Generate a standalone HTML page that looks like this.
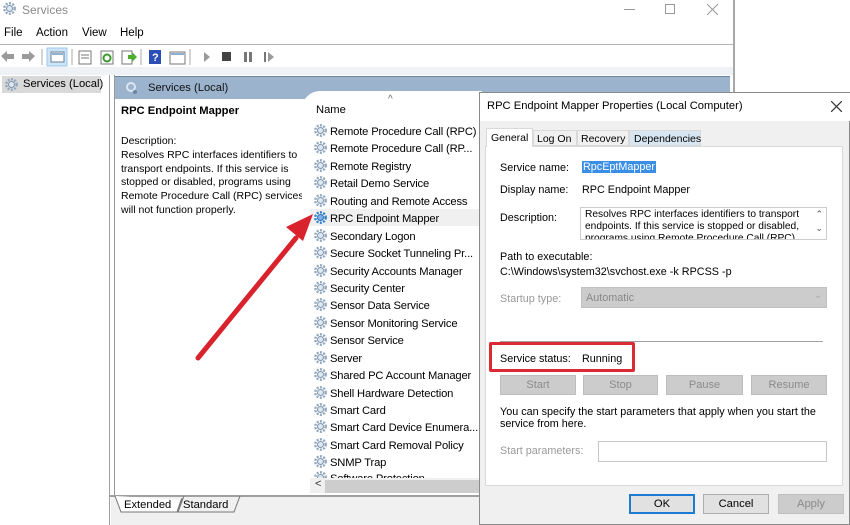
<!DOCTYPE html>
<html><head><meta charset="utf-8"><style>
*{margin:0;padding:0;box-sizing:border-box}
body{width:850px;height:525px;overflow:hidden;background:#fff;font-family:"Liberation Sans",sans-serif;font-size:11px;color:#000;position:relative}
.a{position:absolute;white-space:nowrap}
.g{display:inline-block;width:13px;height:13px;vertical-align:-2px}
.row{position:absolute;left:314px;font-size:11.2px;letter-spacing:-0.15px}
.btn{position:absolute;height:20px;background:#cccccc;border:1px solid #bdbdbd;color:#8a8a8a;text-align:center;line-height:18px;font-size:11px}
.lbl{position:absolute;left:500px;font-size:10.8px}
</style></head><body>
<svg width="0" height="0" style="position:absolute"><defs>
<g id="gear"><circle cx="6.5" cy="6.5" r="5.2" fill="none" stroke="#8fa6bf" stroke-width="2.4" stroke-dasharray="2 1.4"/><circle cx="6.5" cy="6.5" r="3" fill="#dfe8f1" stroke="#7e93ab" stroke-width="1"/></g>
<g id="gearb"><circle cx="6.5" cy="6.5" r="5.2" fill="none" stroke="#2f7fd0" stroke-width="2.4" stroke-dasharray="2 1.4"/><circle cx="6.5" cy="6.5" r="3" fill="#7fb3e8" stroke="#2a6fb8" stroke-width="1"/></g>
</defs></svg>

<!-- main window -->
<div class="a" style="left:733px;top:0;width:2px;height:93px;background:#a8a8a8"></div>
<svg class="a" style="left:3px;top:2px" width="16" height="16"><use href="#gear"/></svg>
<div class="a" style="left:22px;top:3px;font-size:12px;color:#8a8a8a">Services</div>
<div class="a" style="left:624px;top:9px;width:11px;height:1px;background:#999"></div>
<div class="a" style="left:665px;top:4px;width:10px;height:10px;border:1px solid #999"></div>
<svg class="a" style="left:707px;top:4px" width="11" height="11"><path d="M0 0L11 11M11 0L0 11" stroke="#999" stroke-width="1"/></svg>
<div class="a" style="left:4px;top:27px;font-size:11.5px">File</div>
<div class="a" style="left:36px;top:27px;font-size:11.5px">Action</div>
<div class="a" style="left:82px;top:27px;font-size:11.5px">View</div>
<div class="a" style="left:120px;top:27px;font-size:11.5px">Help</div>
<div class="a" style="left:0;top:44px;width:733px;height:1px;background:#b5b5b5"></div>
<!-- toolbar -->
<div class="a" style="left:0;top:45px;width:733px;height:22px;background:#fff"></div>
<svg class="a" style="left:0;top:47px" width="290" height="20">
<path d="M1 9l6-5v3h7v5H7v3z" fill="#9a9a9a"/><path d="M35 9l-6-5v3h-7v5h7v3z" fill="#9a9a9a"/>
<line x1="42" y1="2" x2="42" y2="18" stroke="#aaa"/>
<rect x="47" y="1" width="20" height="18" fill="#cde4f7" stroke="#99c9ef"/><rect x="51" y="5" width="13" height="10" fill="#fff" stroke="#6b7f95"/><rect x="52" y="6" width="11" height="2" fill="#8fb0d0"/>
<line x1="72" y1="2" x2="72" y2="18" stroke="#aaa"/>
<rect x="79" y="4" width="12" height="13" fill="#fff" stroke="#777"/><line x1="81" y1="8" x2="89" y2="8" stroke="#777"/><line x1="81" y1="11" x2="89" y2="11" stroke="#777"/>
<rect x="101" y="4" width="12" height="13" fill="#fff" stroke="#777"/><circle cx="107" cy="11" r="3.5" fill="none" stroke="#3a9a2a" stroke-width="2"/>
<rect x="122" y="4" width="10" height="13" fill="#fff" stroke="#777"/><path d="M128 8h4v-3l5 5-5 5v-3h-4z" fill="#4cae2f"/>
<line x1="141" y1="2" x2="141" y2="18" stroke="#aaa"/>
<rect x="149" y="3" width="12" height="14" fill="#2b4fb6"/><text x="152" y="14" fill="#fff" font-size="11" font-family="Liberation Sans" font-weight="bold">?</text>
<rect x="170" y="5" width="15" height="12" fill="#fff" stroke="#777"/><rect x="171" y="6" width="13" height="2" fill="#8fb0d0"/>
<line x1="190" y1="2" x2="190" y2="18" stroke="#aaa"/>
<path d="M204 5v10l6-5z" fill="#9a9a9a"/><rect x="222" y="5" width="9" height="9" fill="#444"/>
<rect x="244" y="5" width="3" height="10" fill="#777"/><rect x="249" y="5" width="3" height="10" fill="#777"/>
<rect x="264" y="5" width="2" height="10" fill="#777"/><path d="M268 5v10l6-5z" fill="#9a9a9a"/>
</svg>
<div class="a" style="left:0;top:67px;width:733px;height:8px;background:#eef2f7"></div>
<!-- left pane -->
<div class="a" style="left:0;top:75px;width:110px;height:450px;background:#fff;border-right:1px solid #a0a0a0"></div>
<div class="a" style="left:2px;top:76px;width:99px;height:17px;background:#d9d9d9"></div>
<svg class="a" style="left:5px;top:78px" width="14" height="14"><use href="#gear"/></svg>
<div class="a" style="left:23px;top:78px;font-size:11.2px">Services (Local)</div>
<!-- right pane -->
<div class="a" style="left:114px;top:75px;width:619px;height:425px;background:#fff;border-left:1px solid #999"></div>
<div class="a" style="left:115px;top:76px;width:615px;height:23px;background:#9bb3cd;border-top:1px solid #6d86a2"></div>
<svg class="a" style="left:125px;top:81px" width="14" height="14"><circle cx="6" cy="6" r="4" fill="none" stroke="#dbe6f2" stroke-width="2"/><circle cx="10" cy="11" r="2" fill="#6d86a2"/></svg>
<div class="a" style="left:148px;top:82px;font-size:11.2px;color:#111">Services (Local)</div>
<div class="a" style="left:121px;top:105px;font-size:11.2px;font-weight:bold">RPC Endpoint Mapper</div>
<div class="a" style="left:121px;top:135px;font-size:10.5px;line-height:13.8px;white-space:normal;width:185px">Description:<br>Resolves RPC interfaces identifiers to transport endpoints. If this service is stopped or disabled, programs using Remote Procedure Call (RPC) services will not function properly.</div>
<!-- list overlay -->
<div class="a" style="left:302px;top:91px;width:180px;height:405px;background:#fff;border-top-left-radius:18px"></div>
<div class="a" style="left:316px;top:104px;font-size:11.2px">Name</div>
<div class="a" style="left:388px;top:94px;font-size:10px;color:#666">^</div>
<div class="a" style="left:310px;top:209px;width:170px;height:17px;background:#f0f0f0"></div>
<div class="row" style="top:124px"><svg class="g"><use href="#gear"/></svg> Remote Procedure Call (RPC)</div>
<div class="row" style="top:141px"><svg class="g"><use href="#gear"/></svg> Remote Procedure Call (RP...</div>
<div class="row" style="top:159px"><svg class="g"><use href="#gear"/></svg> Remote Registry</div>
<div class="row" style="top:176px"><svg class="g"><use href="#gear"/></svg> Retail Demo Service</div>
<div class="row" style="top:194px"><svg class="g"><use href="#gear"/></svg> Routing and Remote Access</div>
<div class="row" style="top:211px"><svg class="g"><use href="#gearb"/></svg> RPC Endpoint Mapper</div>
<div class="row" style="top:229px"><svg class="g"><use href="#gear"/></svg> Secondary Logon</div>
<div class="row" style="top:246px"><svg class="g"><use href="#gear"/></svg> Secure Socket Tunneling Pr...</div>
<div class="row" style="top:264px"><svg class="g"><use href="#gear"/></svg> Security Accounts Manager</div>
<div class="row" style="top:281px"><svg class="g"><use href="#gear"/></svg> Security Center</div>
<div class="row" style="top:298px"><svg class="g"><use href="#gear"/></svg> Sensor Data Service</div>
<div class="row" style="top:316px"><svg class="g"><use href="#gear"/></svg> Sensor Monitoring Service</div>
<div class="row" style="top:333px"><svg class="g"><use href="#gear"/></svg> Sensor Service</div>
<div class="row" style="top:351px"><svg class="g"><use href="#gear"/></svg> Server</div>
<div class="row" style="top:368px"><svg class="g"><use href="#gear"/></svg> Shared PC Account Manager</div>
<div class="row" style="top:386px"><svg class="g"><use href="#gear"/></svg> Shell Hardware Detection</div>
<div class="row" style="top:403px"><svg class="g"><use href="#gear"/></svg> Smart Card</div>
<div class="row" style="top:420px"><svg class="g"><use href="#gear"/></svg> Smart Card Device Enumera...</div>
<div class="row" style="top:438px"><svg class="g"><use href="#gear"/></svg> Smart Card Removal Policy</div>
<div class="row" style="top:455px"><svg class="g"><use href="#gear"/></svg> SNMP Trap</div>
<div class="a" style="left:310px;top:468px;width:170px;height:10px;overflow:hidden"><div class="row" style="left:4px;top:3px"><svg class="g"><use href="#gear"/></svg> Software Protection</div></div>
<div class="a" style="left:310px;top:478px;width:170px;height:15px;background:#f0f0f0"></div>
<div class="a" style="left:325px;top:480px;width:155px;height:13px;background:#cdcdcd"></div>
<div class="a" style="left:315px;top:478px;font-size:11px;color:#333">&lt;</div>
<!-- bottom tabs -->
<div class="a" style="left:110px;top:495px;width:623px;height:2px;background:#a0a0a0"></div>
<div class="a" style="left:111px;top:497px;width:622px;height:28px;background:#f0f0f0"></div>
<svg class="a" style="left:112px;top:496px" width="130" height="20"><path d="M3 0l6 16h56l4-12" fill="#fff" stroke="#777"/><path d="M66 16l4-14M72 0l-6 16h56l6-16" fill="none" stroke="#777"/></svg>
<div class="a" style="left:124px;top:499px;font-size:11.2px">Extended</div>
<div class="a" style="left:183px;top:499px;font-size:11.2px">Standard</div>

<!-- arrow -->
<svg class="a" style="left:0;top:0" width="480" height="525">
<line x1="198" y1="358" x2="296" y2="238" stroke="#d8232d" stroke-width="5" stroke-linecap="round"/>
<path d="M313 214l-27 13 17 14z" fill="#d8232d"/>
</svg>

<!-- dialog -->
<div class="a" style="left:479px;top:92px;width:371px;height:433px;background:#f0f0f0;border:1px solid #8a8a8a"></div>
<div class="a" style="left:480px;top:93px;width:370px;height:28px;background:#fff"></div>
<div class="a" style="left:487px;top:100px;font-size:11.2px">RPC Endpoint Mapper Properties (Local Computer)</div>
<svg class="a" style="left:831px;top:101px" width="11" height="11"><path d="M0 0L11 11M11 0L0 11" stroke="#333" stroke-width="1.2"/></svg>
<div class="a" style="left:485px;top:146px;width:358px;height:340px;background:#fff;border:1px solid #d9d9d9"></div>
<div class="a" style="left:486px;top:128px;width:47px;height:19px;background:#fff;border:1px solid #d9d9d9;border-bottom:none"></div>
<div class="a" style="left:533px;top:130px;width:44px;height:16px;background:#f0f0f0;border:1px solid #d9d9d9"></div>
<div class="a" style="left:577px;top:130px;width:52px;height:16px;background:#f0f0f0;border:1px solid #d9d9d9"></div>
<div class="a" style="left:629px;top:130px;width:72px;height:16px;background:#d8e6f2;border:1px solid #d9d9d9"></div>
<div class="a" style="left:491px;top:132px;font-size:10.5px">General</div>
<div class="a" style="left:537px;top:133px;font-size:10.5px">Log On</div>
<div class="a" style="left:581px;top:133px;font-size:10.5px">Recovery</div>
<div class="a" style="left:634px;top:133px;font-size:10.5px">Dependencies</div>
<div class="lbl" style="top:162px">Service name:</div>
<div class="a" style="left:582px;top:161px;background:#3a8ee6;color:#fff;padding:0 1px;font-size:10.8px">RpcEptMapper</div>
<div class="lbl" style="top:184px">Display name:</div>
<div class="a" style="left:582px;top:184px;font-size:10.8px">RPC Endpoint Mapper</div>
<div class="lbl" style="top:212px">Description:</div>
<div class="a" style="left:580px;top:207px;width:247px;height:33px;border:1px solid #ccc;overflow:hidden;background:#fff">
<div style="position:absolute;left:4px;top:1px;font-size:10.2px;line-height:12px;white-space:normal;width:228px">Resolves RPC interfaces identifiers to transport endpoints. If this service is stopped or disabled, programs using Remote Procedure Call (RPC)</div>
<div style="position:absolute;right:3px;top:1px;font-size:9px;color:#555">⌃</div><div style="position:absolute;right:3px;top:15px;font-size:9px;color:#555">⌄</div></div>
<div class="lbl" style="top:251px">Path to executable:</div>
<div class="lbl" style="top:266px">C:\Windows\system32\svchost.exe -k RPCSS -p</div>
<div class="lbl" style="top:293px;color:#999">Startup type:</div>
<div class="a" style="left:581px;top:287px;width:246px;height:21px;background:#cccccc;border:1px solid #c0c0c0"></div>
<div class="a" style="left:586px;top:292px;color:#888;font-size:10.8px">Automatic</div>
<div class="a" style="left:814px;top:290px;color:#aaa;font-size:10px">⌄</div>
<div class="a" style="left:500px;top:341px;width:323px;height:1px;background:#a0a0a0"></div>
<div class="a" style="left:489px;top:342px;width:146px;height:30px;border:3px solid #dc2a35;border-radius:2px"></div>
<div class="lbl" style="top:353px">Service status:</div>
<div class="a" style="left:582px;top:353px;font-size:10.8px">Running</div>
<div class="btn" style="left:500px;top:375px;width:76px">Start</div>
<div class="btn" style="left:583px;top:375px;width:75px">Stop</div>
<div class="btn" style="left:666px;top:375px;width:77px">Pause</div>
<div class="btn" style="left:751px;top:375px;width:76px">Resume</div>
<div class="lbl" style="top:406px;line-height:12px;white-space:normal;width:330px">You can specify the start parameters that apply when you start the service from here.</div>
<div class="lbl" style="top:445px;color:#999">Start parameters:</div>
<div class="a" style="left:598px;top:441px;width:229px;height:21px;background:#fff;border:1px solid #c8c8c8"></div>
<div class="a" style="left:629px;top:494px;width:66px;height:20px;background:#e1e1e1;border:2px solid #1f7ad1;text-align:center;line-height:16px;font-size:11.2px">OK</div>
<div class="a" style="left:703px;top:494px;width:66px;height:20px;background:#e1e1e1;border:1px solid #adadad;text-align:center;line-height:18px;font-size:11.2px">Cancel</div>
<div class="a" style="left:778px;top:494px;width:66px;height:20px;background:#cccccc;border:1px solid #bfbfbf;text-align:center;line-height:18px;font-size:11.2px;color:#8a8a8a">Apply</div>
</body></html>
